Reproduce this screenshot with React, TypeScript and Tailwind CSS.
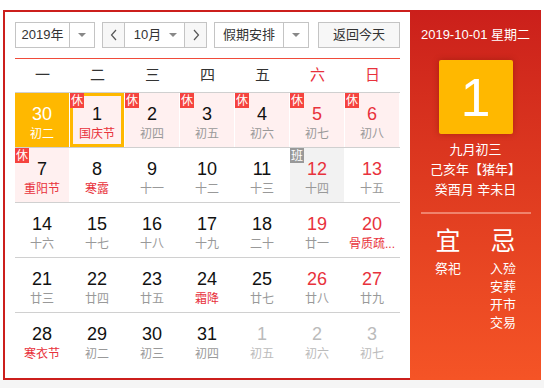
import { clsx } from 'clsx';

type Day = {
  d: number;
  lunar: string;
  tag?: '休' | '班';
  fest?: boolean;
  weekend?: boolean;
  other?: boolean;
  selected?: boolean;
  today?: boolean;
};

const weeks: Day[][] = [
  [
    { d: 30, lunar: '初二', selected: true, other: true },
    { d: 1, lunar: '国庆节', tag: '休', fest: true, today: true },
    { d: 2, lunar: '初四', tag: '休' },
    { d: 3, lunar: '初五', tag: '休' },
    { d: 4, lunar: '初六', tag: '休' },
    { d: 5, lunar: '初七', tag: '休', weekend: true },
    { d: 6, lunar: '初八', tag: '休', weekend: true },
  ],
  [
    { d: 7, lunar: '重阳节', tag: '休', fest: true },
    { d: 8, lunar: '寒露', fest: true },
    { d: 9, lunar: '十一' },
    { d: 10, lunar: '十二' },
    { d: 11, lunar: '十三' },
    { d: 12, lunar: '十四', tag: '班', weekend: true },
    { d: 13, lunar: '十五', weekend: true },
  ],
  [
    { d: 14, lunar: '十六' },
    { d: 15, lunar: '十七' },
    { d: 16, lunar: '十八' },
    { d: 17, lunar: '十九' },
    { d: 18, lunar: '二十' },
    { d: 19, lunar: '廿一', weekend: true },
    { d: 20, lunar: '骨质疏...', weekend: true, fest: true },
  ],
  [
    { d: 21, lunar: '廿三' },
    { d: 22, lunar: '廿四' },
    { d: 23, lunar: '廿五' },
    { d: 24, lunar: '霜降', fest: true },
    { d: 25, lunar: '廿七' },
    { d: 26, lunar: '廿八', weekend: true },
    { d: 27, lunar: '廿九', weekend: true },
  ],
  [
    { d: 28, lunar: '寒衣节', fest: true },
    { d: 29, lunar: '初二' },
    { d: 30, lunar: '初三' },
    { d: 31, lunar: '初四' },
    { d: 1, lunar: '初五', other: true },
    { d: 2, lunar: '初六', other: true },
    { d: 3, lunar: '初七', other: true },
  ],
];

const weekdays = ['一', '二', '三', '四', '五', '六', '日'];

function Caret() {
  return <span className="w-0 h-0 border-l-[4px] border-r-[4px] border-t-[4px] border-l-transparent border-r-transparent border-t-[#888]" />;
}

function DayCell({ day }: { day: Day }) {
  const holiday = day.tag === '休';
  const work = day.tag === '班';
  let bg = 'bg-white';
  if (day.selected) bg = 'bg-[#ffb800]';
  else if (holiday) bg = 'bg-[#fff0f0]';
  else if (work) bg = 'bg-[#f2f2f2]';

  let numColor = 'text-[#111]';
  if (day.selected) numColor = 'text-white';
  else if (day.other) numColor = 'text-[#bbb]';
  else if (day.weekend) numColor = 'text-[#e8323c]';

  let lunarColor = 'text-[#999]';
  if (day.selected) lunarColor = 'text-white';
  else if (day.other) lunarColor = 'text-[#bbb]';
  else if (day.fest) lunarColor = 'text-[#e8323c]';

  return (
    <div
      className={clsx(
        'relative h-[54px] mr-px flex flex-col items-center',
        bg,
        day.today && 'border-[3px] border-[#ffb800]'
      )}
    >
      {day.tag && (
        <span
          className={clsx(
            'absolute w-[14px] h-[15px] flex items-center justify-center text-[12px] leading-none text-white',
            day.today ? '-left-[3px] -top-[3px]' : 'left-0 top-0',
            holiday ? 'bg-[#f5433e]' : 'bg-[#999]'
          )}
        >
          {day.tag}
        </span>
      )}
      <span className={clsx('text-[18px] leading-[20px]', day.today ? 'mt-[8px]' : 'mt-[11px]', numColor)}>{day.d}</span>
      <span className={clsx('text-[12px] leading-[16px] mt-[2px] whitespace-nowrap', lunarColor)}>{day.lunar}</span>
    </div>
  );
}

export default function App() {
  return (
    <div className="w-[544px] h-[388px] bg-[#f5f5f5] font-['Liberation_Sans','Noto_Sans_CJK_SC',sans-serif]">
      <div className="bg-white pt-[10px] pl-[3px] pr-[3px]">
        <div className="flex h-[370px]">
          {/* 左侧日历 */}
          <div className="w-[407px] border-l-2 border-t-2 border-b-2 border-[#cc1f1c] px-[10px] pt-[10px]">
            <div className="flex items-center h-[26px] text-[13px] text-[#333]">
              <div className="w-[80px] h-[26px] border border-[#c4c4c4] flex items-center">
                <span className="flex-1 text-center">2019年</span>
                <span className="w-[25px] h-full border-l border-[#c4c4c4] flex items-center justify-center">
                  <Caret />
                </span>
              </div>
              <div className="ml-[7px] w-[105px] h-[26px] border border-[#c4c4c4] flex items-center">
                <span className="w-[22px] h-full bg-[#f7f7f7] border-r border-[#c4c4c4] flex items-center justify-center">
                  <svg width="8" height="12" viewBox="0 0 8 12"><path d="M6 1 1.5 6 6 11" fill="none" stroke="#555" strokeWidth="1.2" /></svg>
                </span>
                <span className="flex-1 flex items-center justify-center gap-[8px] pl-[2px]">
                  10月
                  <Caret />
                </span>
                <span className="w-[22px] h-full bg-[#f7f7f7] border-l border-[#c4c4c4] flex items-center justify-center">
                  <svg width="8" height="12" viewBox="0 0 8 12"><path d="M2 1 6.5 6 2 11" fill="none" stroke="#555" strokeWidth="1.2" /></svg>
                </span>
              </div>
              <div className="ml-[7px] w-[95px] h-[26px] border border-[#c4c4c4] flex items-center">
                <span className="flex-1 text-center">假期安排</span>
                <span className="w-[25px] h-full border-l border-[#c4c4c4] flex items-center justify-center">
                  <Caret />
                </span>
              </div>
              <div className="ml-auto w-[82px] h-[26px] border border-[#c4c4c4] bg-[#f7f7f7] flex items-center justify-center">
                返回今天
              </div>
            </div>
            <div className="mt-[10px] h-px bg-[#f04b3a]" />
            <div className="grid grid-cols-7 h-[33px] items-center text-[15px] text-[#333]">
              {weekdays.map((w, i) => (
                <span key={w} className={clsx('text-center', i >= 5 && 'text-[#e8323c]')}>
                  {w}
                </span>
              ))}
            </div>
            {weeks.map((week, wi) => (
              <div key={wi} className="grid grid-cols-7 border-t border-[#d0d0d0]">
                {week.map((day, di) => (
                  <DayCell key={di} day={day} />
                ))}
              </div>
            ))}
          </div>

          {/* 右侧详情 */}
          <div className="w-[131px] bg-gradient-to-b from-[#cb1f1b] to-[#f55426] text-white flex flex-col items-center text-[13px]">
            <div className="mt-[17px] leading-[16px]">2019-10-01 星期二</div>
            <div className="mt-[17px] w-[74px] h-[74px] rounded-[2px] bg-[#ffb800] shadow-[0_0_6px_rgba(120,20,0,0.45)] flex items-center justify-center text-[54px] leading-none">
              1
            </div>
            <div className="mt-[6px] leading-[20px] text-center">
              <div>九月初三</div>
              <div>己亥年【猪年】</div>
              <div>癸酉月 辛未日</div>
            </div>
            <div className="mt-[12px] w-[110px] h-[2px] bg-[#f0836c]" />
            <div className="mt-[12px] w-full flex justify-center gap-[27px]">
              <div className="flex flex-col items-center w-[28px]">
                <span className="text-[25px] leading-[30px]">宜</span>
                <span className="mt-[4px] leading-[18px]">祭祀</span>
              </div>
              <div className="flex flex-col items-center w-[28px]">
                <span className="text-[25px] leading-[30px]">忌</span>
                <div className="mt-[4px] leading-[18px] flex flex-col items-center">
                  <span>入殓</span>
                  <span>安葬</span>
                  <span>开市</span>
                  <span>交易</span>
                </div>
              </div>
            </div>
          </div>
        </div>
      </div>
    </div>
  );
}
